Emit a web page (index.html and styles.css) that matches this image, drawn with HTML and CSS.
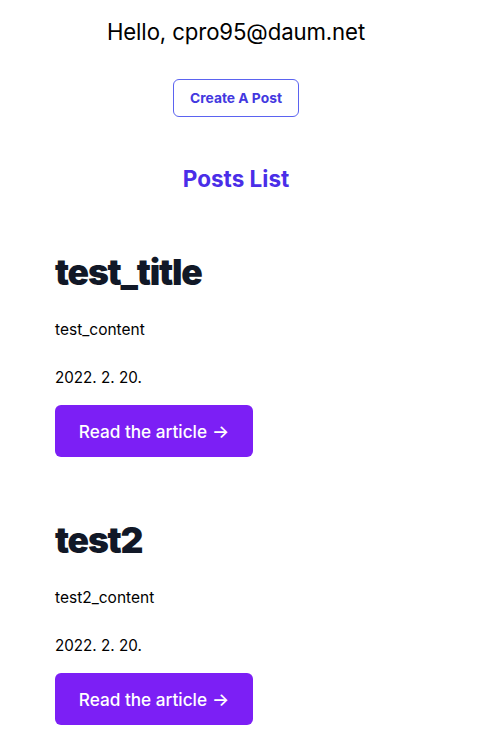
FILE: index.html
```html
<!DOCTYPE html>
<html>
<head>
<meta charset="utf-8">
<link rel="stylesheet" href="styles.css">
</head>
<body>
<div class="page">
  <header class="header">
    <p class="hello">Hello, cpro95@daum.net</p>
    <a class="create-btn" href="#">Create A Post</a>
  </header>
  <h2 class="list-title">Posts List</h2>
  <main class="posts">
    <article class="post">
      <h1 class="post-title">test_title</h1>
      <p class="post-content">test_content</p>
      <p class="post-date">2022. 2. 20.</p>
      <a class="read-btn" href="#">Read the article <span class="arrow">→</span></a>
    </article>
    <article class="post">
      <h1 class="post-title">test2</h1>
      <p class="post-content">test2_content</p>
      <p class="post-date">2022. 2. 20.</p>
      <a class="read-btn" href="#">Read the article <span class="arrow">→</span></a>
    </article>
  </main>
</div>
</body>
</html>
```
FILE: styles.css
```css
* { box-sizing: border-box; }
html, body { margin: 0; padding: 0; background: #fff; }
body { font-family: Inter, "Noto Sans", sans-serif; color: #000; }
.page { width: 472px; }
.header { display: flex; flex-direction: column; align-items: center; padding-top: 18px; }
.hello { margin: 0; font-size: 22.2px; line-height: 28px; letter-spacing: -0.005em; }
.create-btn {
  margin-top: 33px;
  display: inline-flex; align-items: center; justify-content: center;
  width: 126px; height: 38px;
  border: 1px solid #5b63f0; border-radius: 6px;
  color: #4338e0; font-weight: 700; font-size: 13.8px; text-decoration: none;
}
.list-title { margin: 46px 0 0; text-align: center; font-size: 22.5px; line-height: 32px; font-weight: 700; color: #4a2ee8; }
.posts { padding: 58px 0 0 55px; display: flex; flex-direction: column; gap: 64px; }
.post { display: flex; flex-direction: column; align-items: flex-start; }
.post-title { margin: 0; font-size: 35.5px; line-height: 40px; font-weight: 900; letter-spacing: -0.035em; color: #111827; }
.post-content { margin: 25px 0 0; font-size: 15.5px; line-height: 24px; }
.post-date { margin: 24px 0 0; font-size: 15.2px; line-height: 24px; }
.read-btn {
  margin-top: 15px;
  display: inline-flex; align-items: center; justify-content: center;
  width: 198px; height: 52px; border-radius: 6px;
  background: #7c1ff5; color: #fff; font-size: 17.2px; font-weight: 500; text-decoration: none;
}
.arrow { margin-left: 5px; font-size: 18px; }
```
